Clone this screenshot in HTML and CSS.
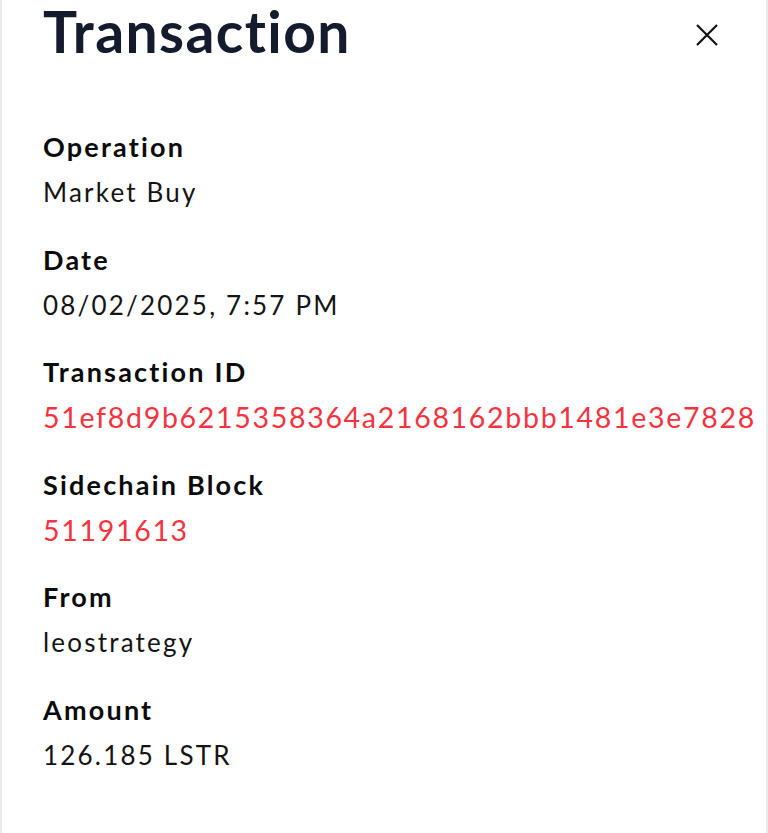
FILE: index.html
```html
<!DOCTYPE html>
<html lang="en">
<head>
<meta charset="utf-8">
<title>Transaction</title>
<link rel="stylesheet" href="styles.css">
</head>
<body>
<div class="panel">
  <header class="head">
    <h1 class="title">Transaction</h1>
    <button class="close" aria-label="Close">
      <svg viewBox="0 0 22 22" width="22" height="22"><path d="M1 1 L21 21 M21 1 L1 21" stroke="#111" stroke-width="2.2" fill="none"/></svg>
    </button>
  </header>
  <dl class="details">
    <div class="row"><dt class="label">Operation</dt><dd class="value">Market Buy</dd></div>
    <div class="row"><dt class="label">Date</dt><dd class="value">08/02/2025, 7:57 PM</dd></div>
    <div class="row"><dt class="label">Transaction ID</dt><dd class="value link">51ef8d9b6215358364a2168162bbb1481e3e7828</dd></div>
    <div class="row"><dt class="label">Sidechain Block</dt><dd class="value link">51191613</dd></div>
    <div class="row"><dt class="label">From</dt><dd class="value">leostrategy</dd></div>
    <div class="row"><dt class="label">Amount</dt><dd class="value">126.185 LSTR</dd></div>
  </dl>
</div>
</body>
</html>
```
FILE: styles.css
```css
html, body {
  margin: 0;
  padding: 0;
  background: #fff;
}
body {
  font-family: Lato, "Open Sans", sans-serif;
  font-variant-ligatures: none;
  color: #111;
}
.panel {
  box-sizing: border-box;
  width: 768px;
  min-height: 833px;
  border-left: 2px solid #ebebf1;
  border-right: 2px solid #ebebf1;
  padding: 0 48px 0 41px;
}
.head {
  display: flex;
  justify-content: space-between;
  align-items: flex-start;
}
.title {
  margin: 0;
  padding-top: 3px;
  font-size: 57px;
  line-height: 56px;
  font-weight: 700;
  letter-spacing: 1.4px;
  color: #141b2d;
}
.close {
  margin-top: 24px;
  padding: 0;
  border: 0;
  background: none;
  width: 22px;
  height: 22px;
  display: block;
}
.close svg { display: block; }
.details {
  margin: 65px 0 0;
  display: flex;
  flex-direction: column;
  gap: 21.5px;
}
.row { display: flex; flex-direction: column; }
.label {
  font-size: 27px;
  line-height: 45px;
  font-weight: 700;
  color: #0b0b0b;
  letter-spacing: 2.2px;
}
.value {
  margin: 0;
  font-size: 26px;
  line-height: 46px;
  color: #141414;
  letter-spacing: 2.2px;
  white-space: nowrap;
}
.link {
  color: #f3343f;
  font-size: 28.5px;
  letter-spacing: 1.7px;
}
```
